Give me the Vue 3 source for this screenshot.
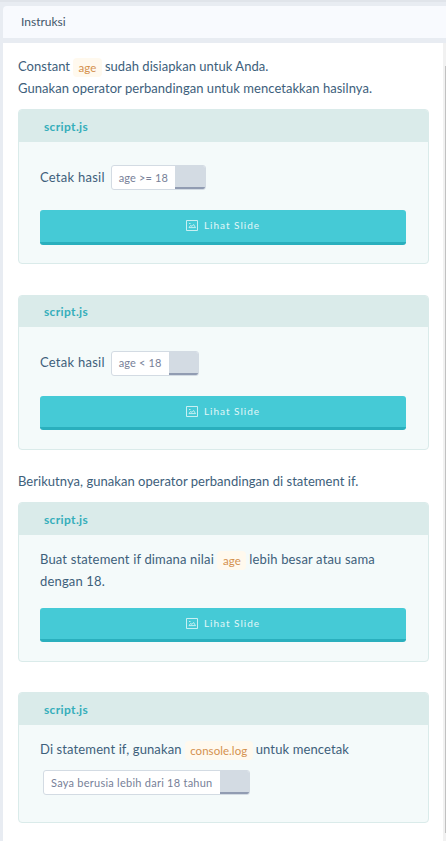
<script setup>
const cards = [
  { id: 'first', lines: [[{ t: 'Cetak hasil' }, { chip: 'age >= 18', size: 'wide' }]], button: true },
  { id: 'second', lines: [[{ t: 'Cetak hasil' }, { chip: 'age < 18', size: 'narrow' }]], button: true, note: 'Berikutnya, gunakan operator perbandingan di statement if.' },
  { id: 'third', lines: [[{ t: 'Buat statement if dimana nilai' }, { code: 'age' }, { t: 'lebih besar atau sama' }], [{ t: 'dengan 18.' }]], button: true },
  { id: 'fourth', lines: [[{ t: 'Di statement if, gunakan' }, { code: 'console.log' }, { t: 'untuk mencetak' }], [{ chip: 'Saya berusia lebih dari 18 tahun', size: 'long' }]] }
]
</script>

<template>
  <main class="page">
    <header class="title">Instruksi</header>
    <div class="panel">
      <section class="content">
        <div class="line"><span>Constant</span><code>age</code><span>sudah disiapkan untuk Anda.</span></div>
        <div class="line">Gunakan operator perbandingan untuk mencetakkan hasilnya.</div>
        <template v-for="card in cards" :key="card.id">
          <article class="card" :class="card.id">
            <h2>script.js</h2>
            <div class="body">
              <div v-for="(line, i) in card.lines" :key="i" class="line">
                <template v-for="(part, j) in line" :key="j">
                  <span v-if="part.t">{{ part.t }}</span>
                  <code v-else-if="part.code">{{ part.code }}</code>
                  <span v-else class="chip" :class="part.size"><span class="value">{{ part.chip }}</span><span class="copy"></span></span>
                </template>
              </div>
              <button v-if="card.button">
                <svg width="12" height="11" viewBox="0 0 12 11" fill="none" stroke="currentColor">
                  <path d="M.5.5h11v10H.5z" stroke-opacity=".85" />
                  <path d="M3 7.6h6.5L7.6 4.5 6.1 6.3 4.5 5.5 3 7.6M3 3.5h1.5" stroke-width=".8" />
                </svg>
                <span>Lihat Slide</span>
              </button>
            </div>
          </article>
          <div v-if="card.note" class="line note">{{ card.note }}</div>
        </template>
      </section>
      <div class="scroll"><div class="thumb"></div></div>
    </div>
  </main>
</template>

<style>
body { margin: 0; overflow: hidden; }
</style>

<style scoped>
* { box-sizing: border-box; }
.page {
  height: 841px;
  padding: 4px 0 0 3px;
  border-top: 2px solid #e0e4ea;
  background: #e8ecf2;
  font-family: Lato, sans-serif;
  font-size: 13px;
  color: #3d607b;
  overflow: hidden;
}
.title {
  height: 32px;
  padding-left: 18px;
  border-radius: 4px 0 0 0;
  background: #f8fafe;
  color: #43566a;
  font-size: 12px;
  line-height: 32px;
}
.panel { display: flex; height: 798px; margin-top: 5px; background: #fff; }
.content { flex: 1; padding: 12px 14px 0 15px; }
.scroll { width: 3px; padding: 23px 0 0 2px; background: #f1f1f1; }
.thumb { height: 767px; background: #c1c1c1; }
.line { display: flex; height: 22px; line-height: 22px; align-items: center; white-space: nowrap; letter-spacing: .04px; }
.body .line { letter-spacing: .16px; }
.fourth .body .line { letter-spacing: .12px; }
.first .body .line, .second .body .line { letter-spacing: .25px; }
code {
  height: 19px;
  margin: 3px 3px 0;
  padding: 0 5.5px;
  border-radius: 4px;
  background: #fff9ee;
  color: #d4914e;
  font-family: Lato, sans-serif;
  font-size: 11.5px;
  line-height: 20px;
  letter-spacing: .05px;
}
.third code { margin-left: 3.5px; }
.card { border: 1px solid #daebea; border-radius: 4px; background: #f4fafa; overflow: hidden; }
.first { height: 155px; margin-top: 10px; }
.second { height: 155px; margin-top: 31px; }
.third { height: 160px; margin-top: 10px; }
.fourth { height: 131px; margin-top: 30px; }
.note { margin-top: 20px; }
h2 { height: 32px; margin: 0; padding-left: 25px; background: #daebea; color: #35aebb; font-size: 12px; font-weight: 700; line-height: 34px; letter-spacing: .35px; }
.second h2 { height: 31px; line-height: 32px; }
.body { padding: 13px 22px 0 21px; }
.first .body { padding-top: 24px; }
.second .body { padding-top: 25px; }
.second .line { line-height: 20px; }
.second .line > span:first-child { height: 22px; }
.chip { display: flex; height: 25px; margin-left: 6px; border: 1px solid #d3dbe3; border-radius: 3px; background: #fff; color: #777f98; font-size: 11px; line-height: 24px; letter-spacing: .13px; overflow: hidden; }
.second .chip { line-height: 22px; }
.value { flex: 1; padding-left: 7px; }
.copy { width: 30px; border-bottom: 2px solid #919cb2; background: #d3dbe3; }
.wide { width: 95px; }
.narrow { width: 88px; }
.narrow .copy { width: 29px; }
.long { width: 207px; margin: 0 0 0 3px; letter-spacing: .25px; }
.long .copy { width: 29px; }
.fourth .line + .line { margin-top: 11px; }
button {
  display: flex;
  align-items: center;
  justify-content: center;
  gap: 6px;
  width: 100%;
  height: 35px;
  margin-top: 22px;
  padding: 0 0 1px;
  border: 0;
  border-bottom: 3px solid #2aafbd;
  border-radius: 3px;
  background: #45cad6;
  color: #e1f7f8;
  font: 10px Lato, sans-serif;
  letter-spacing: 1px;
}
.first button { padding-bottom: 2px; }
.second button { height: 34px; margin-top: 22px; }
.third button { height: 34px; margin-top: 16px; }
</style>
